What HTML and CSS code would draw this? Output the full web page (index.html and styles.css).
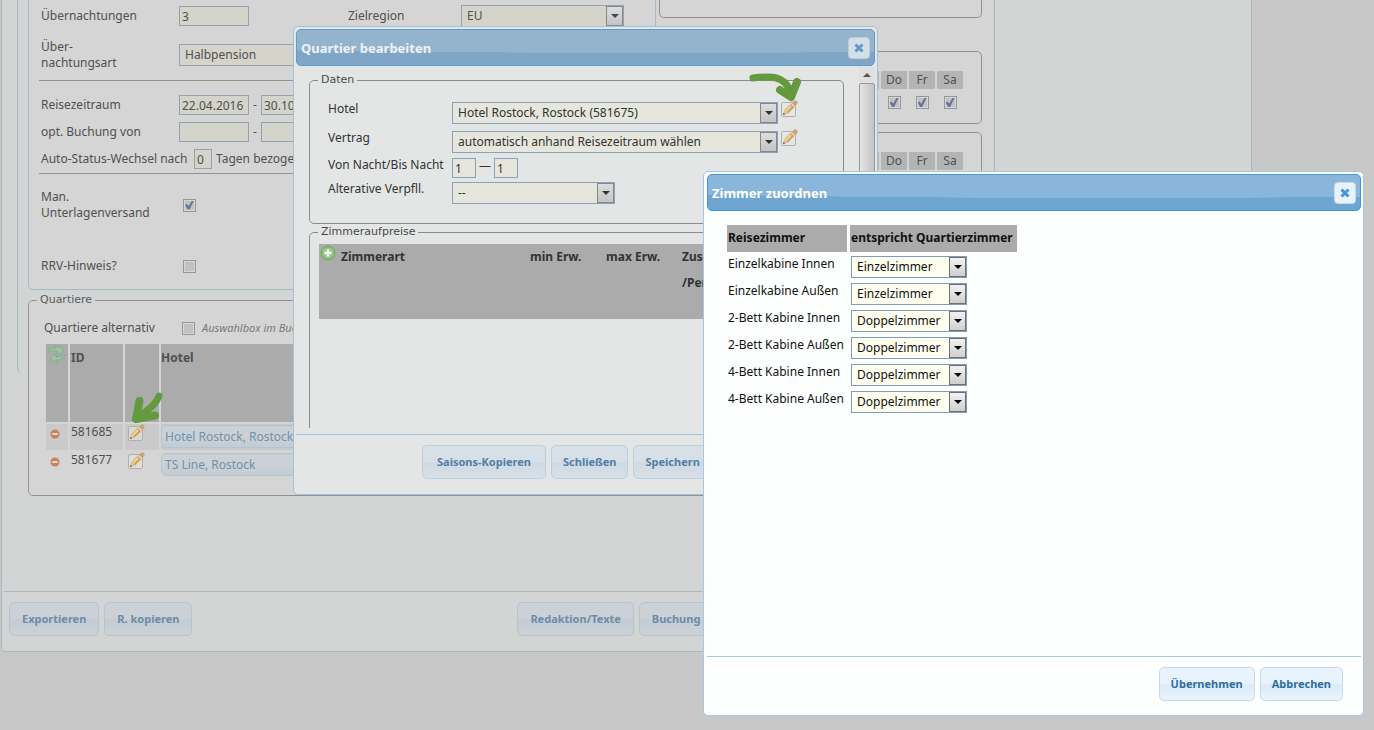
FILE: index.html
```html
<!DOCTYPE html>
<html lang="de">
<head>
<meta charset="utf-8">
<title>Zimmer zuordnen</title>
<link rel="stylesheet" href="styles.css">
</head>
<body>
<svg width="0" height="0" class="defs" aria-hidden="true">
  <symbol id="pencil" viewBox="0 0 18 18">
    <rect x="1.500" y="2.500" width="14" height="14" rx="1.500" fill="#e8e8e6" fill-opacity=".5" stroke="#b0b0b0" stroke-width="1"/>
    <path d="M6 12L13.500 4.500" stroke="#cfa65c" stroke-width="5"/>
    <path d="M5.700 11.300L13 4" stroke="#ecd595" stroke-width="2.200"/>
    <path d="M13 5L15.200 2.800" stroke="#cba377" stroke-width="4.600" stroke-linecap="round"/>
    <path d="M12.400 5.600l1-1" stroke="#e0dccf" stroke-width="5"/>
    <path d="M3 15l1.300-4.800 3.500 3.500z" fill="#dcc0a0"/>
    <path d="M3 15l.6-2.200 1.600 1.600z" fill="#6b5a48"/>
  </symbol>
  <symbol id="cross" viewBox="0 0 10 10">
    <path d="M1.500 1.500l7 7M8.500 1.500l-7 7" stroke="currentColor" stroke-width="3"/>
  </symbol>
  <symbol id="minus" viewBox="0 0 10 10">
    <circle cx="5" cy="5" r="4.500" fill="#c9825c"/><rect x="2.300" y="4" width="5.400" height="2" fill="#ecd9cf"/>
  </symbol>
</svg>

<main class="window main-window">
  <div class="panel">
    <div class="columns">
      <form class="trip">
        <div class="row r-nights">
          <label class="lbl" for="nights">Übernachtungen</label>
          <input class="text w70" id="nights" value="3">
          <label class="lbl region" for="region">Zielregion</label>
          <span class="select w163"><select id="region"><option>EU</option></select></span>
        </div>
        <div class="row r-type">
          <label class="lbl" for="type">Über-<br>nachtungsart</label>
          <span class="select w163"><select id="type"><option>Halbpension</option></select></span>
        </div>
        <hr>
        <div class="row r-period">
          <label class="lbl" for="from">Reisezeitraum</label>
          <input class="text w70" id="from" value="22.04.2016"><span class="dash">-</span><input class="text w70" value="30.10.2016" aria-label="bis">
        </div>
        <div class="row r-book">
          <label class="lbl" for="bfrom">opt. Buchung von</label>
          <input class="text w70" id="bfrom"><span class="dash">-</span><input class="text w70" aria-label="Buchung bis">
        </div>
        <div class="row r-auto">
          <label for="days">Auto-Status-Wechsel nach</label>
          <input class="text w18" id="days" value="0">
          <span>Tagen bezogen</span>
        </div>
        <hr>
        <div class="row r-man">
          <label class="lbl" for="man">Man.<br>Unterlagenversand</label>
          <input type="checkbox" id="man" checked>
        </div>
        <div class="row r-rrv">
          <label class="lbl" for="rrv">RRV-Hinweis?</label>
          <input type="checkbox" id="rrv">
        </div>
      </form>
      <div class="side">
        <div class="box box-a"></div>
        <div class="box box-b">
          <div class="days"><label for="d1">Mi</label><label for="d2">Do</label><label for="d3">Fr</label><label for="d4">Sa</label>
          <input type="checkbox" id="d1" checked><input type="checkbox" id="d2" checked><input type="checkbox" id="d3" checked><input type="checkbox" id="d4" checked></div>
        </div>
        <div class="box box-c">
          <div class="days"><span>Mi</span><span>Do</span><span>Fr</span><span>Sa</span></div>
        </div>
      </div>
    </div>
    <fieldset class="quarters">
      <legend>Quartiere</legend>
      <div class="row alt">
        <label for="alt">Quartiere alternativ</label>
        <input type="checkbox" id="alt">
        <em>Auswahlbox im Buchungsformular</em>
      </div>
      <table class="hotels">
        <thead><tr>
          <th class="c1"><svg width="20" height="20" viewBox="0 0 20 20"><g fill="#9cc6a0" stroke="#78ab80" stroke-width=".7" stroke-linejoin="round"><path d="M1 8.500Q3 3.200 10 4.300L9.500 1.500 17.500 5.200 15.500 9.800 9.500 8.800 11.500 7.400Q6 5.500 1 8.500z"/><path d="M19 10.500Q17.500 16.800 10 15.800L10.500 18.500 4.500 15 6.500 10.500 11.500 11.700 9.500 12.900Q14.500 14 19 10.500z"/></g></svg></th>
          <th class="c2">ID</th><th class="c3"></th><th>Hotel</th>
        </tr></thead>
        <tbody>
          <tr><td class="c1"><svg class="dot"><use href="#minus"/></svg></td><td class="c2">581685</td><td class="c3"><svg class="pencil"><use href="#pencil"/></svg>
            <svg class="arrow arrow-left" viewBox="0 0 36 36"><path d="M30 6C26 16 18 20 9 28" fill="none" stroke="#63993f" stroke-width="7" stroke-linecap="round"/><path d="M10.500 11L7 29 26 25.500" fill="none" stroke="#63993f" stroke-width="8" stroke-linecap="round" stroke-linejoin="round"/></svg></td>
            <td><button class="hotel">Hotel Rostock, Rostock</button></td></tr>
          <tr><td class="c1"><svg class="dot"><use href="#minus"/></svg></td><td class="c2">581677</td><td class="c3"><svg class="pencil"><use href="#pencil"/></svg></td>
            <td><button class="hotel">TS Line, Rostock</button></td></tr>
        </tbody>
      </table>
    </fieldset>
  </div>
  <footer class="bar main-bar">
    <button class="btn">Exportieren</button><button class="btn">R. kopieren</button>
    <button class="btn second">Redaktion/Texte</button><button class="btn">Buchung</button>
  </footer>
</main>

<section class="window edit" role="dialog" aria-label="Quartier bearbeiten">
  <header class="title"><h2>Quartier bearbeiten</h2><button class="close" aria-label="Schließen"><svg width="10" height="10"><use href="#cross"/></svg></button></header>
  <div class="scroll">
    <div class="content">
      <fieldset class="data">
        <legend>Daten</legend>
        <div class="grid">
          <label for="hotel">Hotel</label>
          <div class="line"><span class="select w326"><select id="hotel"><option>Hotel Rostock, Rostock (581675)</option></select></span><svg class="pencil"><use href="#pencil"/></svg>
            <svg class="arrow arrow-right" viewBox="0 0 56 34"><path d="M5 8C22 6 36 5 42 21" fill="none" stroke="#63993f" stroke-width="7" stroke-linecap="round"/><path d="M32 20L43 27 49 12" fill="none" stroke="#63993f" stroke-width="8" stroke-linecap="round" stroke-linejoin="round"/></svg></div>
          <label for="contract">Vertrag</label>
          <div class="line"><span class="select w326"><select id="contract"><option>automatisch anhand Reisezeitraum wählen</option></select></span><svg class="pencil"><use href="#pencil"/></svg></div>
          <label for="n1">Von Nacht/Bis Nacht</label>
          <div class="line nights"><input class="text w24" id="n1" value="1"><span>—</span><input class="text w24" value="1" aria-label="Bis Nacht"></div>
          <label for="board">Alterative Verpfll.</label>
          <div class="line"><span class="select w163"><select id="board"><option>--</option></select></span></div>
        </div>
      </fieldset>
      <fieldset class="prices">
        <legend>Zimmeraufpreise</legend>
        <table>
          <tr><th class="p0"><svg width="16" height="16" viewBox="0 0 16 16"><circle cx="8" cy="8" r="7" fill="#86b878" stroke="#78a96f"/><circle cx="8" cy="8" r="5.500" fill="#98c68b"/><path d="M8 4.500v7M4.500 8h7" stroke="#eef5ec" stroke-width="2.400"/></svg></th><th class="p1">Zimmerart</th><th class="p2">min Erw.</th><th class="p2">max Erw.</th><th>Zus.<br>/Pers.</th></tr>
        </table>
      </fieldset>
    </div>
    <div class="scrollbar" aria-hidden="true"><i></i><b></b></div>
  </div>
  <footer class="bar edit-bar"><button class="btn wide">Saisons-Kopieren</button><button class="btn">Schließen</button><button class="btn">Speichern</button></footer>
</section>

<section class="window assign" role="dialog" aria-label="Zimmer zuordnen">
  <header class="title"><h2>Zimmer zuordnen</h2><button class="close" aria-label="Schließen"><svg width="10" height="10"><use href="#cross"/></svg></button></header>
  <div class="assign-body">
    <table class="rooms">
      <thead><tr><th class="own">Reisezimmer</th><th class="match">entspricht Quartierzimmer</th></tr></thead>
      <tbody>
        <tr><td><label for="z1">Einzelkabine Innen</label></td><td><span class="select w116"><select id="z1"><option>Einzelzimmer</option></select></span></td></tr>
        <tr><td><label for="z2">Einzelkabine Außen</label></td><td><span class="select w116"><select id="z2"><option>Einzelzimmer</option></select></span></td></tr>
        <tr><td><label for="z3">2-Bett Kabine Innen</label></td><td><span class="select w116"><select id="z3"><option>Doppelzimmer</option></select></span></td></tr>
        <tr><td><label for="z4">2-Bett Kabine Außen</label></td><td><span class="select w116"><select id="z4"><option>Doppelzimmer</option></select></span></td></tr>
        <tr><td><label for="z5">4-Bett Kabine Innen</label></td><td><span class="select w116"><select id="z5"><option>Doppelzimmer</option></select></span></td></tr>
        <tr><td><label for="z6">4-Bett Kabine Außen</label></td><td><span class="select w116"><select id="z6"><option>Doppelzimmer</option></select></span></td></tr>
      </tbody>
    </table>
  </div>
  <footer class="bar assign-bar"><button class="btn">Übernehmen</button><button class="btn">Abbrechen</button></footer>
</section>
</body>
</html>
```

FILE: styles.css
```css
*, *::before, *::after { box-sizing: border-box; }

body {
  margin: 0;
  min-height: 100vh;
  overflow: hidden;
  background: #c8c8c8;
  font: 12px/16px "Noto Sans", sans-serif;
}

.defs { position: absolute; }
button, input, select { font: inherit; color: inherit; margin: 0; }
fieldset { margin: 0; padding: 0; border: 1px solid var(--rule); border-radius: 5px; min-width: 0; }
legend { font: 11px/16px "DejaVu Sans", sans-serif; margin-left: 8px; padding: 0 3px; color: var(--legend); }
table { border-collapse: separate; border-spacing: 0; }
th { text-align: left; vertical-align: top; background: #ababab; padding: 0; }
td { padding: 0; vertical-align: top; }

.window {
  position: absolute;
  display: flex;
  flex-direction: column;
  background: var(--bg);
  border: 1px solid var(--edge);
  border-radius: 5px;
  color: var(--ink);
}

.main-window {
  --bg: #d3d5d4; --edge: #a6b8c4; --ink: #505050; --rule: #939393; --legend: #5a5a5a;
  --field: #d4d4ca; --field-edge: #92a3b3; --btn-a: #cbd1d6; --btn-b: #c4ccd4; --btn-edge: #b7c4ce; --btn-ink: #6c8da7; --arrow: #444;
  left: 1px; right: 122px; top: 0; height: 652px;
  border-top: 0; border-radius: 0 0 5px 5px;
}
.edit {
  --bg: #e4e6e5; --edge: #a5c2d6; --ink: #333; --rule: #8a8c8b; --legend: #4a4a4a;
  --field: #e6e6dc; --field-edge: #8aa2bb; --btn-a: #d7dfe7; --btn-b: #cfdae3; --btn-edge: #bccfdd; --btn-ink: #507fa8; --arrow: #333;
  --t1: #94b3cc; --t2: #7fa6c6; --t-edge: #5f9bcb; --t-ink: #eef2f5; --x: #5d9bcf; --close: #d4dfe8;
  left: 293px; top: 26px; width: 585px; height: 469px; padding: 2px;
}
.assign {
  --bg: #fdfffe; --edge: #a6c9e2; --ink: #111; --rule: #888; --legend: #333;
  --field: #fffff0; --field-edge: #7f9db9; --btn-a: #e9f3fd; --btn-b: #dbebf8; --btn-edge: #c5dbec; --btn-ink: #2e6e9e; --arrow: #000;
  --t1: #89b6da; --t2: #6ea6d1; --t-edge: #4297d7; --t-ink: #fff; --x: #4297d7; --close: #e8f2fb;
  left: 703px; right: 10px; top: 171px; height: 545px; padding: 2px 2px 2px 3px;
}

.title {
  display: flex; align-items: center; justify-content: space-between;
  height: 37px; flex: none; padding: 0 4px;
  border: 1px solid var(--t-edge); border-radius: 5px;
  background: radial-gradient(ellipse 120% 66% at 62% 0, var(--t1) 99%, transparent 100%), var(--t2);
}
.title h2 { margin: 0; font-size: 13px; line-height: 16px; color: var(--t-ink); }
.close {
  width: 22px; height: 22px; padding: 5px; display: flex;
  border: 1px solid var(--btn-edge); border-radius: 4px; background: var(--close); color: var(--x);
}

.bar { flex: none; display: flex; gap: 5px; border-top: 1px solid var(--edge); }
.btn {
  height: 34px; padding: 0 11px;
  border: 1px solid var(--btn-edge); border-radius: 5px;
  background: linear-gradient(var(--btn-a) 50%, var(--btn-b) 52%, var(--btn-a));
  color: var(--btn-ink); font-size: 11px; font-weight: bold; line-height: 16px; white-space: nowrap;
}
.wide { min-width: 124px; }
.main-bar { height: 60px; margin-left: 2px; padding: 10px 5px; }
.main-bar .btn { padding: 0 12px; }
.main-bar .second { margin-left: 320px; }
.edit-bar { height: 58px; padding: 10px 0 0 126px; }
.assign-bar { height: 57px; padding: 10px 18px 0 0; justify-content: flex-end; }

.text {
  height: 20px; padding: 0 2px; border: 1px solid var(--field-edge); background: var(--field);
}
.w18 { width: 18px; } .w24 { width: 24px; } .w70 { width: 70px; }
.w116 { width: 116px; } .w163 { width: 163px; } .w326 { width: 326px; }

.select { position: relative; display: block; flex: none; height: 22px; }
.select select {
  display: block; width: 100%; height: 22px; padding: 0 20px 0 5px;
  appearance: none; border: 1px solid var(--field-edge); border-radius: 0; background: var(--field);
}
.select::before {
  content: ""; position: absolute; right: 1px; top: 1px; bottom: 1px; width: 17px;
  border: 1px solid #888; background: linear-gradient(#ddd, #c4c4c4); pointer-events: none;
}
.select::after {
  content: ""; position: absolute; right: 5px; top: 9px;
  border: 4px solid transparent; border-top-color: var(--arrow); border-bottom: 0; pointer-events: none;
}
.assign .select::before { background: linear-gradient(#f2f2f2, #cfcfcf); border-color: #707070; }

input[type="checkbox"] {
  appearance: none; width: 13px; height: 13px; flex: none; display: grid; place-items: center;
  border: 1px solid #979797; background: #bfc1c3; box-shadow: inset 0 0 0 1px #d6d6d6;
}
input[type="checkbox"]:checked::before {
  content: ""; width: 9px; height: 9px; background: #66719c;
  clip-path: polygon(0 50%, 22% 40%, 40% 65%, 78% 0, 100% 0, 50% 100%, 32% 100%);
}

/* main window */
.panel {
  position: relative; flex: 1; padding: 0 13px 0 26px; width: 993px; min-height: 0;
}
.panel::before {
  content: ""; position: absolute; left: 15px; top: 0; width: 6px; height: 374px;
  border-left: 1px solid var(--edge); border-bottom-left-radius: 6px;
}
.columns { display: flex; height: 290px; margin-bottom: 2px; }
.trip {
  width: 628px; flex: none; background: #d5d5d5; padding: 5px 0 0 10px;
  border: 1px solid var(--edge); border-top: 0; border-radius: 0 0 5px 5px;
}
.trip hr { margin: 0; border: 0; border-top: 1px solid var(--rule); }
.row { display: flex; align-items: center; padding-left: 2px; }
.lbl { width: 138px; flex: none; }
.region { width: 113px; margin-left: 99px; }
.r-nights { height: 22px; margin-bottom: 12px; }
.r-type { height: 32px; margin-bottom: 9px; }
.r-period { height: 20px; margin-top: 14px; }
.r-book { height: 20px; margin-top: 7px; }
.r-auto { height: 20px; margin: 7px 0 4px; gap: 4px; white-space: nowrap; }
.r-auto label { width: 149px; }
.r-man { height: 32px; margin-top: 15px; }
.r-rrv { height: 16px; margin-top: 37px; }
.trip input[type="checkbox"] { margin-left: 4px; }
.dash { width: 12px; text-align: center; }

.side {
  flex: 1; display: flex; flex-direction: column; gap: 8px; padding: 0 12px 0 3px;
  background: #d5d5d5; border-right: 1px solid var(--edge); margin-right: -13px;
}
.box { border: 1px solid var(--rule); border-radius: 5px; display: flex; justify-content: flex-end; }
.box-a { height: 18px; border-top: 0; border-radius: 0 0 5px 5px; margin-bottom: 25px; }
.box-b, .box-c { height: 73px; padding: 19px 18px 0 0; }
.days { display: grid; grid-template-columns: repeat(4, 26px); column-gap: 2px; row-gap: 7px; align-content: start; justify-items: center; }
.days label, .days span { width: 26px; height: 18px; line-height: 18px; text-align: center; background: #b4b4b4; }

.quarters { height: 204px; background: #d5d5d5; }
.quarters .alt { height: 16px; margin-top: 12px; padding-left: 15px; white-space: nowrap; }
.alt label { width: 138px; }
.alt em { margin-left: 7px; font-size: 11px; color: #7a7a7a; }
.hotels { width: calc(100% - 30px); margin: 6px 0 0 15px; border-spacing: 2px; table-layout: fixed; }
.hotels th { height: 78px; padding-top: 6px; }
.hotels .c1 { width: 22px; }
.hotels th.c1 { padding-top: 0; }
.hotels .c2 { width: 53px; padding-left: 1px; }
.hotels .c3 { width: 34px; position: relative; padding-left: 1px; }
.hotels tbody tr { height: 26px; }
.hotels tbody tr:first-child { background: #cacaca; }
.hotels .dot { width: 10px; height: 10px; margin: 5px 4px; }
.hotels .pencil { margin-left: 1px; }
.hotel { display: block; width: 100%; height: 23px; margin-top: 1px; padding: 0 3px; text-align: left; border: 1px solid #b3c4d1; border-radius: 5px; background: linear-gradient(#cbd1d6 50%, #c4ccd4); color: #6f92ad; }
.pencil { width: 18px; height: 18px; flex: none; display: block; }
.arrow { position: absolute; }
.arrow-left { width: 36px; height: 36px; left: 4px; top: -34px; }
.arrow-right { width: 56px; height: 34px; right: -26px; top: -32px; }

/* edit dialog */
.scroll { flex: 1; min-height: 0; display: flex; }
.content { flex: 1; padding: 6px 15px 0 13px; height: 362px; overflow: hidden; }
.data { height: 152px; }
.grid { display: grid; grid-template-columns: 124px 1fr; grid-template-rows: 29px 27px 24px 29px; padding: 14px 0 0 18px; }
.grid > label { white-space: nowrap; margin-top: -1px; }
.line { position: relative; display: flex; gap: 2px; width: 326px; }
.nights { gap: 3px; }
.grid .line .pencil { margin-top: -2px; }
.prices { height: 240px; }
.prices table { width: calc(100% - 18px); height: 75px; margin: 4px 9px; table-layout: fixed; }
.prices th { line-height: 26px; }
.prices .p0 { width: 22px; padding: 1px; }
.prices .p0 svg { display: block; }
.prices .p1 { width: 189px; }
.prices .p2 { width: 76px; }
.scrollbar { width: 16px; flex: none; display: flex; flex-direction: column; background: #e0e0e0; }
.scrollbar i { align-self: center; margin: 7px 0 6px; border: 4px solid transparent; border-bottom-color: #555; border-top: 0; }
.scrollbar b { height: 230px; border: 1px solid #9a9a9a; border-radius: 2px; background: linear-gradient(90deg, #e4e4e4, #c4c4c6); }

/* assign dialog */
.assign-body { flex: 1; padding: 14px 17px; }
.rooms { border-spacing: 3px 0; }
.rooms th { height: 27px; padding: 5px 1px; }
.rooms .own { width: 120px; }
.rooms .match { width: 167px; }
.rooms td { height: 27px; padding: 4px 1px 0; }
```
